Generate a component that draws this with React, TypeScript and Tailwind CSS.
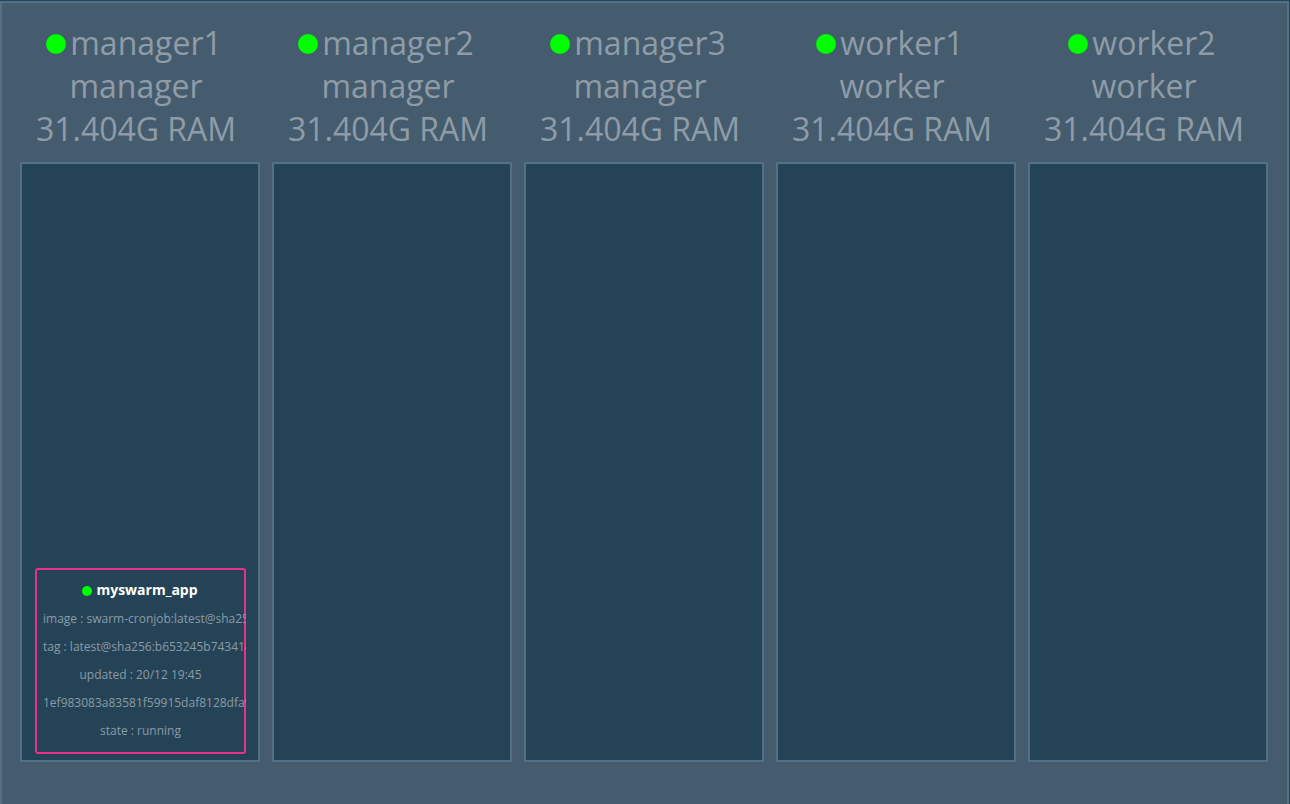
type Task = {
  service: string;
  details: string[];
};

type SwarmNode = {
  name: string;
  role: string;
  memory: string;
  tasks: Task[];
};

const nodes: SwarmNode[] = [
  {
    name: 'manager1',
    role: 'manager',
    memory: '31.404G RAM',
    tasks: [
      {
        service: 'myswarm_app',
        details: [
          'image : swarm-cronjob:latest@sha256',
          'tag : latest@sha256:b653245b743414',
          'updated : 20/12 19:45',
          '1ef983083a83581f59915daf8128dfa9',
          'state : running',
        ],
      },
    ],
  },
  { name: 'manager2', role: 'manager', memory: '31.404G RAM', tasks: [] },
  { name: 'manager3', role: 'manager', memory: '31.404G RAM', tasks: [] },
  { name: 'worker1', role: 'worker', memory: '31.404G RAM', tasks: [] },
  { name: 'worker2', role: 'worker', memory: '31.404G RAM', tasks: [] },
];

function TaskCard({ task }: { task: Task }) {
  return (
    <li className="overflow-hidden rounded-[3px] px-2 pt-2 pb-[9px] text-center text-xs text-[#8a9ba8] inset-ring-2 inset-ring-[#e8308c]">
      <h3 className="mb-px flex h-7 items-center justify-center gap-1 pr-px text-sm font-bold text-white">
        <span className="mt-px size-[10px] rounded-full bg-[#00ff00]" />
        {task.service}
      </h3>
      {task.details.map((line) => (
        <p key={line} className="h-7 leading-7 whitespace-nowrap">
          {line}
        </p>
      ))}
    </li>
  );
}

function NodeColumn({ node }: { node: SwarmNode }) {
  return (
    <section className="flex min-w-0 flex-1 flex-col">
      <header className="pr-2 pb-3 text-center text-[32px] leading-[43px] whitespace-nowrap text-[#8f9ca8]">
        <h2 className="flex items-center justify-center gap-1 pr-1">
          <span className="mt-0.5 size-5 rounded-full bg-[#00ff00]" />
          {node.name}
        </h2>
        <p>{node.role}</p>
        <p>{node.memory}</p>
      </header>
      <ul className="flex min-h-[600px] flex-col justify-end gap-2 border-2 border-[#527086] bg-[#254356] pt-[6px] pr-3 pb-[6px] pl-[13px]">
        {node.tasks.map((task) => (
          <TaskCard key={task.service} task={task} />
        ))}
      </ul>
    </section>
  );
}

export default function App() {
  return (
    <div className="flex min-h-screen bg-[#254356] pt-px pr-px font-['Open_Sans',sans-serif]">
      <main className="flex flex-1 items-start gap-3 border-2 border-b-0 border-[#527086] bg-[#455c6e] pt-[18px] pr-[19px] pb-10 pl-[18px]">
        {nodes.map((node) => (
          <NodeColumn key={node.name} node={node} />
        ))}
      </main>
    </div>
  );
}
